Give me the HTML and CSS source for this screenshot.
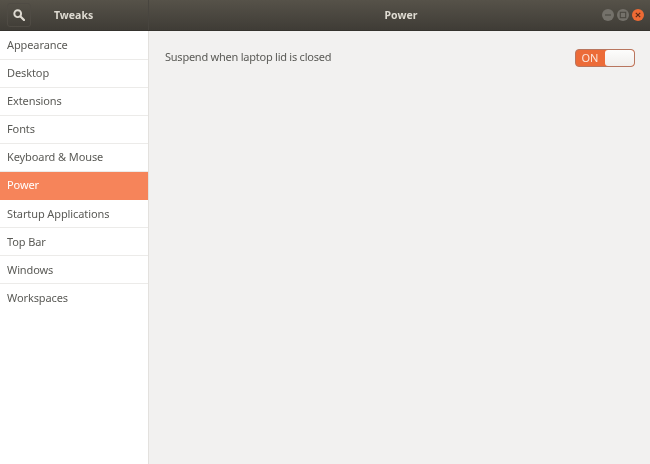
FILE: index.html
```html
<!DOCTYPE html>
<html lang="en">
<head>
<meta charset="utf-8">
<title>Tweaks - Power</title>
<link rel="stylesheet" href="styles.css">
</head>
<body>
<div class="window">
  <header class="titlebar">
    <div class="title-left">
      <button class="search-btn" aria-label="Search">
        <svg viewBox="0 0 12 12" width="12" height="12"><circle cx="4.7" cy="4.7" r="3.4" fill="none" stroke="#dfdbd2" stroke-width="1.9"/><path d="M7.5 7.5 L11 11" stroke="#dfdbd2" stroke-width="2.2" stroke-linecap="round"/></svg>
      </button>
      <span class="app-title">Tweaks</span>
    </div>
    <div class="title-right">
      <span class="page-title">Power</span>
      <div class="controls">
        <span class="ctl ctl-grey"><svg viewBox="0 0 12 12" width="12" height="12"><path d="M3 6h6" stroke="#4a4740" stroke-width="1.1"/></svg></span>
        <span class="ctl ctl-grey"><svg viewBox="0 0 12 12" width="12" height="12"><rect x="3.3" y="3.3" width="5.4" height="5.4" fill="none" stroke="#4a4740" stroke-width="1.1"/></svg></span>
        <span class="ctl ctl-close"><svg viewBox="0 0 12 12" width="12" height="12"><path d="M3.8 3.8l4.4 4.4M8.2 3.8l-4.4 4.4" stroke="#5a2a18" stroke-width="1.2"/></svg></span>
      </div>
    </div>
  </header>
  <div class="body">
    <nav class="sidebar">
      <div class="item first-rows">Appearance</div>
      <div class="item first-rows">Desktop</div>
      <div class="item first-rows">Extensions</div>
      <div class="item first-rows">Fonts</div>
      <div class="item first-rows">Keyboard &amp; Mouse</div>
      <div class="item first-rows active">Power</div>
      <div class="item">Startup Applications</div>
      <div class="item">Top Bar</div>
      <div class="item">Windows</div>
      <div class="item">Workspaces</div>
    </nav>
    <main class="content">
      <div class="row">
        <span class="label">Suspend when laptop lid is closed</span>
        <div class="switch"><span class="on">ON</span><span class="knob"></span></div>
      </div>
    </main>
  </div>
</div>
</body>
</html>
```
FILE: styles.css
```css
* { box-sizing: border-box; }
html, body { margin: 0; padding: 0; }
body { width: 650px; height: 464px; overflow: hidden; font-family: "Noto Sans", "Open Sans", sans-serif; font-size: 11px; color: #5a5a56; }
.window { width: 650px; height: 464px; display: flex; flex-direction: column; background: #f2f1f0; filter: blur(0.3px); }
.titlebar { height: 31px; display: flex; background: linear-gradient(#565249, #3f3c36); border-bottom: 1px solid #35332e; color: #dfdbd2; font-weight: 700; font-size: 10.5px; }
.title-left { width: 149px; display: flex; align-items: center; padding-left: 7px; border-right: 1px solid #48453f; }
.search-btn { width: 24px; height: 24px; padding: 0; display: flex; align-items: center; justify-content: center; background: transparent; border: 1px solid #4f4b44; border-radius: 3px; }
.app-title { margin-left: 23px; }
.title-right { flex: 1; position: relative; display: flex; align-items: center; justify-content: center; }
.page-title { margin-left: 3px; }
.controls { position: absolute; right: 6px; top: 9px; display: flex; gap: 3px; }
.ctl { width: 12px; height: 12px; border-radius: 50%; display: block; }
.ctl svg { display: block; }
.ctl-grey { background: #74716a; }
.ctl-close { background: #ee6a34; }
.body { flex: 1; display: flex; min-height: 0; }
.sidebar { width: 149px; padding-top: 0.5px; background: #fff; border-right: 1px solid #e3e1de; display: flex; flex-direction: column; letter-spacing: -0.1px; }
.item { height: 28.1px; line-height: 27px; padding-left: 7px; border-bottom: 1px solid #ecebe9; }
.first-rows { line-height: 25.5px; }
.item.active { background: #f6845a; color: #fff; border-bottom-color: #f6845a; }
.item:last-child { border-bottom: 0; }
.content { flex: 1; padding: 18px 15px 0 16px; }
.row { display: flex; align-items: center; justify-content: space-between; height: 18px; }
.label { letter-spacing: -0.24px; margin-bottom: 3px; }
.switch { width: 60px; height: 18px; display: flex; border: 1px solid #b8765f; border-radius: 4px; background: #ec6b38; overflow: hidden; }
.on { flex: 1; color: #fbe6dc; text-align: center; line-height: 16px; font-size: 11px; padding-right: 1px; }
.knob { width: 29px; height: 16px; background: linear-gradient(#fdfdfc, #f0eeec); border-radius: 3px; }
```
